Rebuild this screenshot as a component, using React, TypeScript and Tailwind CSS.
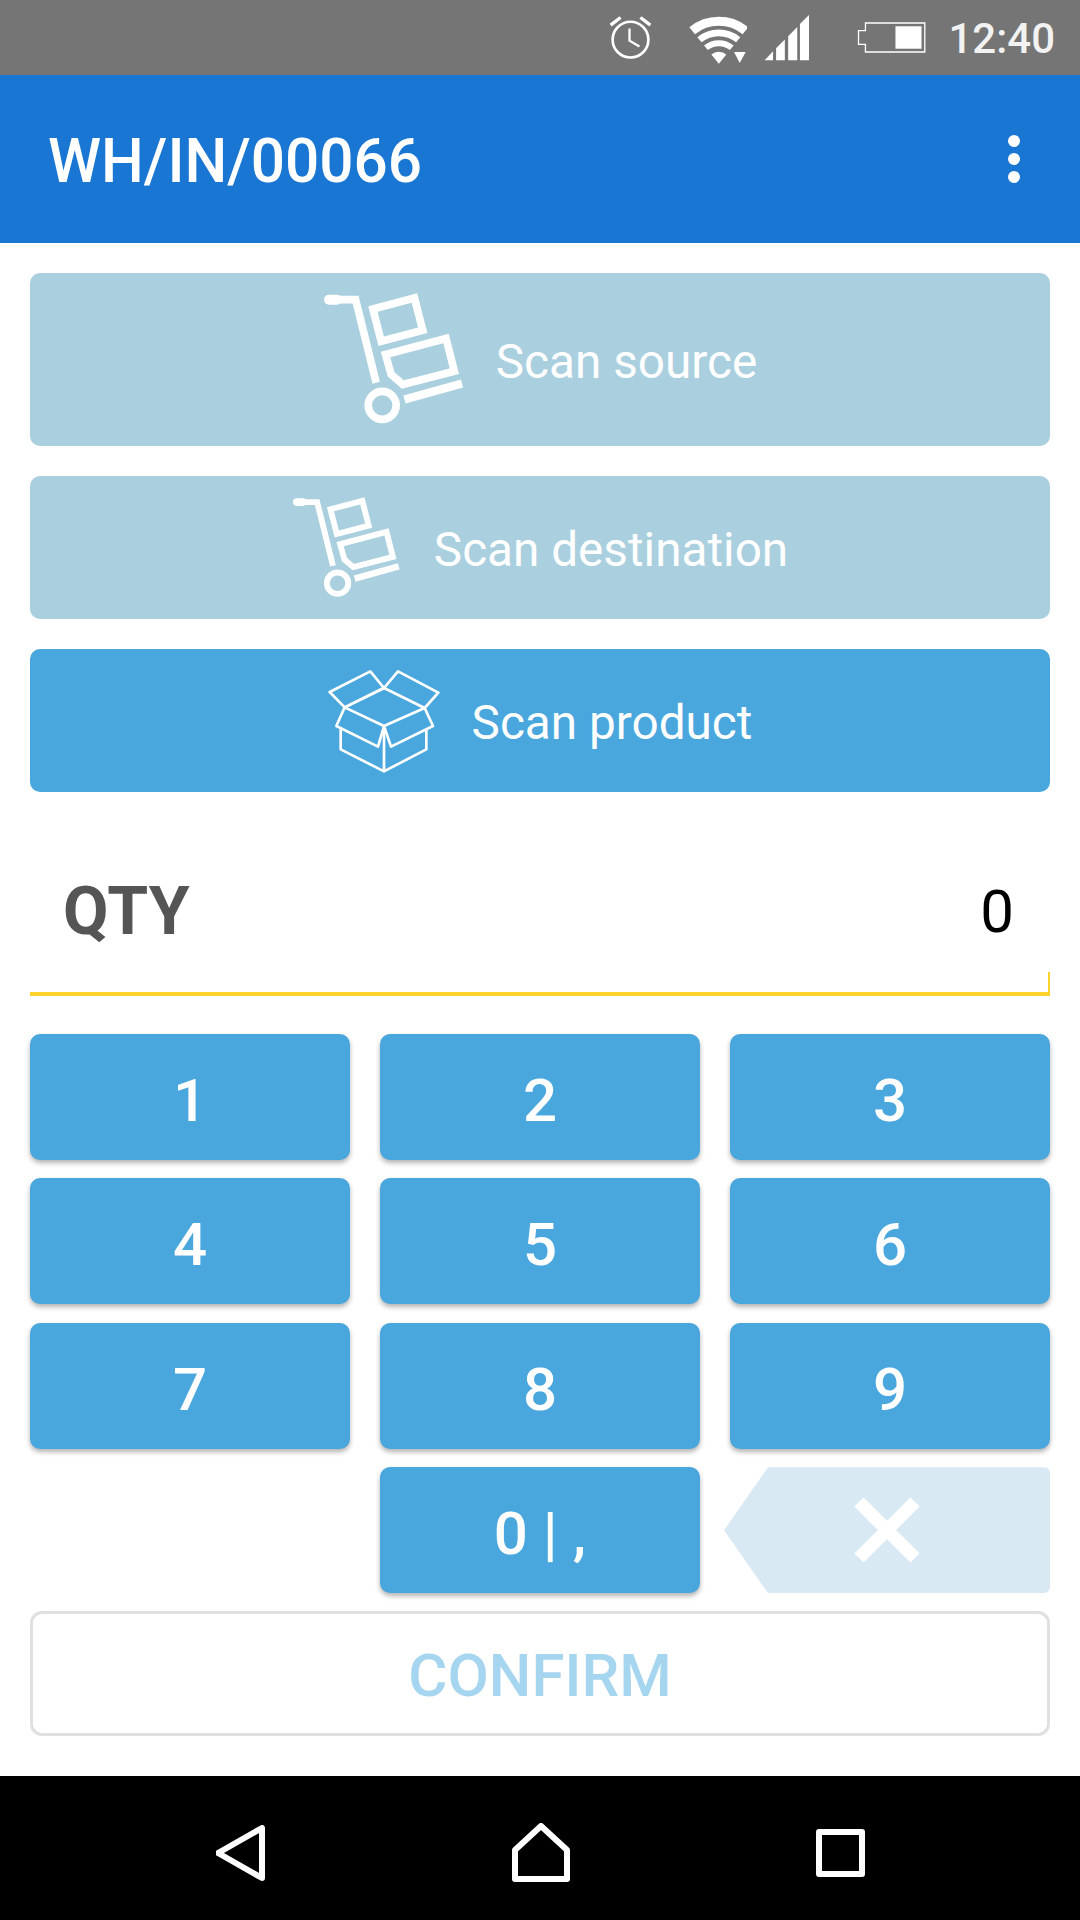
function Trolley({ className }: { className: string }) {
    return (
        <svg viewBox="130 70 430 400" className={className} fill="none" stroke="#fff">
            <path d="M148 90 H172" strokeWidth="30" strokeLinecap="round" />
            <path d="M160 90 H228 L290 340" strokeWidth="23" />
            <path d="M280 118 L405 85 L430 182 L305 215 Z" strokeWidth="23" />
            <path d="M318 255 L500 207 L525 305 L370 345 L335 315 Z" strokeWidth="23" />
            <circle cx="308" cy="408" r="42" strokeWidth="23" />
            <path d="M375 390 L548 342" strokeWidth="25" />
        </svg>
    )
}

function BoxIcon() {
    return (
        <svg viewBox="85 55 336 312" className="w-[112px] h-[104px]" fill="none" stroke="#fff" strokeWidth="8" strokeLinejoin="round">
            <path d="M90 124 L212 62 L253 112 L135 170 Z" />
            <path d="M253 112 L295 62 L416 126 L375 172" />
            <path d="M135 170 L253 112 L375 172 L253 226 Z" />
            <path d="M135 170 L110 226 L235 288 L253 226 L274 288 L400 226 L375 172" />
            <path d="M123 236 V296 L253 362 L380 296 V238" />
            <path d="M253 226 V362" />
        </svg>
    )
}

function StatusBar() {
    return (
        <div className="h-[75px] bg-[#757575] flex items-center justify-end pr-[25px]">
            <svg viewBox="150 45 130 135" className="w-[43px] h-[45px]" fill="none" stroke="#fff">
                <circle cx="215" cy="119" r="54" strokeWidth="8" />
                <path d="M212 85 V122 L242 140" strokeWidth="7" />
                <path d="M155 75 L185 52 M245 52 L275 75" strokeWidth="10" />
            </svg>
            <svg viewBox="390 45 175 148" className="w-[58px] h-[49px] ml-[37px] mt-[3px]">
                <g fill="none" stroke="#fff">
                    <path d="M399.5 92.5 A128 128 0 0 1 560.5 92.5" strokeWidth="27" />
                    <path d="M421.5 119.7 A93 93 0 0 1 538.5 119.7" strokeWidth="20" />
                    <path d="M441 144 A62 62 0 0 1 519 144" strokeWidth="18" />
                </g>
                <path d="M480 192 L457.4 164 A36 36 0 0 1 502.6 164 Z" fill="#fff" />
                <path d="M526 157 H561 L543 190 Z" fill="#fff" />
            </svg>
            <svg viewBox="618 45 137 140" className="w-[46px] h-[47px] ml-[17px]" fill="#fff">
                <path d="M620 183 H645 V156 Z" />
                <path d="M654 183 H680 V121 L654 147 Z" />
                <path d="M690 183 H717 V84 L690 111 Z" />
                <path d="M725 183 H752 V48 L725 75 Z" />
            </svg>
            <svg viewBox="893 64 206 94" className="w-[69px] h-[31px] ml-[47px]">
                <path d="M917 67 H1097 V155 H917 V132 H896 V90 H917 Z" fill="none" stroke="#fff" strokeWidth="4" />
                <rect x="1008" y="77" width="79" height="68" fill="#fff" />
            </svg>
            <span className="ml-[22px] text-[42px] leading-none font-medium text-[#f2f2f2] pt-[2px]">12:40</span>
        </div>
    )
}

function Key({ label }: { label: string }) {
    return (
        <div className="h-[126px] rounded-[10px] bg-[#49a7de] shadow-[0_3px_5px_rgba(0,0,0,0.3)] flex items-center justify-center pt-[8px] text-white text-[60px] font-medium leading-none">
            {label}
        </div>
    )
}

export default function App() {
    return (
        <div className="w-[1080px] h-[1920px] flex flex-col bg-white font-[Roboto,sans-serif]">
            <StatusBar />
            <div className="h-[168px] bg-[#1976d2] flex items-center justify-between pl-[48px] pr-[60px]">
                <h1 className="text-[60.3px] leading-none font-medium text-white pt-[7px]">WH/IN/00066</h1>
                <div className="flex flex-col gap-[6px]">
                    <span className="w-3 h-3 rounded-full bg-white" />
                    <span className="w-3 h-3 rounded-full bg-white" />
                    <span className="w-3 h-3 rounded-full bg-white" />
                </div>
            </div>

            <div className="flex-1 px-[30px] pt-[30px]">
                <div className="flex flex-col gap-[30px]">
                    <div className="h-[173px] rounded-[10px] bg-[#aacfdf] flex items-center justify-center gap-[30px] text-white text-[47.7px] leading-none">
                        <Trolley className="w-[143px] h-[133px]" />
                        <span className="pt-[7px]">Scan source</span>
                    </div>
                    <div className="h-[143px] rounded-[10px] bg-[#aacfdf] flex items-center justify-center gap-[32px] text-white text-[47.7px] leading-none">
                        <Trolley className="w-[110px] h-[102px]" />
                        <span className="pt-[7px]">Scan destination</span>
                    </div>
                    <div className="h-[143px] rounded-[10px] bg-[#49a7de] flex items-center justify-center gap-[32px] text-white text-[47.7px] leading-none">
                        <BoxIcon />
                        <span className="pt-[7px]">Scan product</span>
                    </div>
                </div>

                <div className="relative mt-[40px] h-[164px] border-b-4 border-[#ffd22e] flex items-center justify-between pl-[33px] pr-[36px]">
                    <span className="text-[66px] leading-none font-bold text-[#555555]">QTY</span>
                    <span className="text-[60px] leading-none text-black">0</span>
                    <span className="absolute right-0 bottom-0 w-[2px] h-[20px] bg-[#ffd22e]" />
                </div>

                <div className="mt-[38px] grid grid-cols-3 gap-x-[30px] gap-y-[18.4px]">
                    {["1", "2", "3", "4", "5", "6", "7", "8", "9"].map((k) => (
                        <Key key={k} label={k} />
                    ))}
                    <div />
                    <Key label="0 | ," />
                    <div className="-ml-[6px] h-[126px] rounded-r-[6px] bg-[#d9e9f4] [clip-path:polygon(0_50%,44px_0,100%_0,100%_100%,44px_100%)] flex items-center justify-center">
                        <svg viewBox="0 0 66 66" className="w-[66px] h-[66px]" fill="none" stroke="#fff" strokeWidth="13">
                            <path d="M5 5 L61 61 M61 5 L5 61" />
                        </svg>
                    </div>
                </div>

                <div className="mt-[18px] h-[125px] rounded-[12px] border-[3px] border-[#e0e0e0] flex items-center justify-center pt-[5px] text-[60px] leading-none font-medium text-[#a6d5f0]">
                    CONFIRM
                </div>
            </div>

            <div className="h-[144px] bg-black flex items-center justify-center gap-[246px] pt-[9px]">
                <svg viewBox="0 0 50 56" className="w-[50px] h-[56px]" fill="none" stroke="#fff" strokeWidth="6" strokeLinejoin="round">
                    <path d="M2 28 L46 3 V53 Z" />
                </svg>
                <svg viewBox="0 0 58 59" className="w-[58px] h-[59px]" fill="none" stroke="#fff" strokeWidth="6" strokeLinejoin="round">
                    <path d="M29 3 L3 27 V56 H55 V27 Z" />
                </svg>
                <svg viewBox="0 0 49 48" className="w-[49px] h-[48px]" fill="none" stroke="#fff" strokeWidth="6" strokeLinejoin="round">
                    <rect x="3" y="3" width="43" height="42" />
                </svg>
            </div>
        </div>
    )
}
